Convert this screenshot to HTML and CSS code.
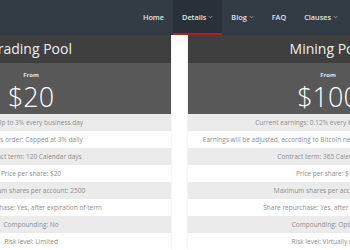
FILE: index.html
```html
<!DOCTYPE html>
<html lang="en">
<head>
    <meta charset="UTF-8">
    <meta name="viewport" content="width=device-width, initial-scale=1.0">
    <title>Pools</title>
    <link rel="stylesheet" href="styles.css">
</head>
<body>
    <nav class="topbar">
        <ul class="menu">
            <li><a href="#">Home</a></li>
            <li class="active"><a href="#">Details <svg class="caret" viewBox="0 0 6 4"><path d="M1 1l2 2 2-2"/></svg></a></li>
            <li><a href="#">Blog <svg class="caret" viewBox="0 0 6 4"><path d="M1 1l2 2 2-2"/></svg></a></li>
            <li><a href="#">FAQ</a></li>
            <li><a href="#">Clauses <svg class="caret" viewBox="0 0 6 4"><path d="M1 1l2 2 2-2"/></svg></a></li>
        </ul>
    </nav>

    <div class="pools">
        <div class="pool">
            <div class="pool-head">Trading Pool</div>
            <div class="pool-price">
                <span class="from">From</span>
                <span class="amount">$20</span>
            </div>
            <ul class="pool-terms">
                <li>Yield: Up to 3% every business day</li>
                <li>Payouts order: Capped at 3% daily</li>
                <li>Contract term: 120 Calendar days</li>
                <li>Price per share: $20</li>
                <li>Maximum shares per account: 2500</li>
                <li>Share repurchase: Yes, after expiration of term</li>
                <li>Compounding: No</li>
                <li>Risk level: Limited</li>
            </ul>
        </div>

        <div class="pool">
            <div class="pool-head">Mining Pool</div>
            <div class="pool-price">
                <span class="from">From</span>
                <span class="amount">$100</span>
            </div>
            <ul class="pool-terms">
                <li>Current earnings: 0.12% every business day, avg</li>
                <li>Earnings will be adjusted, according to Bitcoin network difficulty and exchange rate</li>
                <li>Contract term: 365 Calendar days</li>
                <li>Price per share: $100</li>
                <li>Maximum shares per account: 1000</li>
                <li>Share repurchase: Yes, after one year term</li>
                <li>Compounding: Optional</li>
                <li>Risk level: Virtually none</li>
            </ul>
        </div>
    </div>
</body>
</html>
```

FILE: styles.css
```css
body {
    margin: 0;
    font-family: "Open Sans", Arial, sans-serif;
    background: #fff;
    overflow: hidden;
}
.topbar {
    background: #333b44;
    height: 35px;
    display: flex;
    justify-content: flex-end;
    padding-right: 3px;
}
.menu {
    list-style: none;
    margin: 0;
    padding: 0;
    display: flex;
}
.menu li {
    display: flex;
}
.menu a {
    display: flex;
    align-items: center;
    gap: 2px;
    padding: 0 9px;
    color: #e2e4e6;
    font-size: 7.3px;
    font-weight: 600;
    text-decoration: none;
    border-bottom: 2px solid transparent;
}
.menu .active a {
    background: #2a3037;
    border-bottom-color: #b3202c;
}
.caret {
    width: 5px;
    height: 4px;
    fill: none;
    stroke: #aab0b6;
    stroke-width: 1;
}
.pools {
    display: flex;
    gap: 17px;
    margin-left: -109px;
}
.pool {
    width: 280px;
    flex-shrink: 0;
    box-shadow: 0 0 2px rgba(0,0,0,0.12);
}
.pool-head {
    background: #3f3f3f;
    color: #eeeeee;
    height: 28px;
    line-height: 28px;
    text-align: center;
    font-size: 14px;
}
.pool-price {
    background: #585858;
    color: #fff;
    height: 51px;
    text-align: center;
    display: flex;
    flex-direction: column;
    align-items: center;
}
.from {
    font-size: 6px;
    font-weight: 700;
    color: #e4e4e4;
    margin-top: 8px;
    line-height: 8px;
}
.amount {
    font-size: 27px;
    font-weight: 300;
    line-height: 30px;
    margin-top: 3px;
}
.pool-terms {
    list-style: none;
    margin: 0;
    padding: 0;
}
.pool-terms li {
    height: 17px;
    line-height: 17px;
    text-align: center;
    font-size: 6.5px;
    color: #8e8e8e;
    white-space: nowrap;
    background: #fff;
}
.pool-terms li:nth-child(odd) {
    background: #ebebeb;
}
```
